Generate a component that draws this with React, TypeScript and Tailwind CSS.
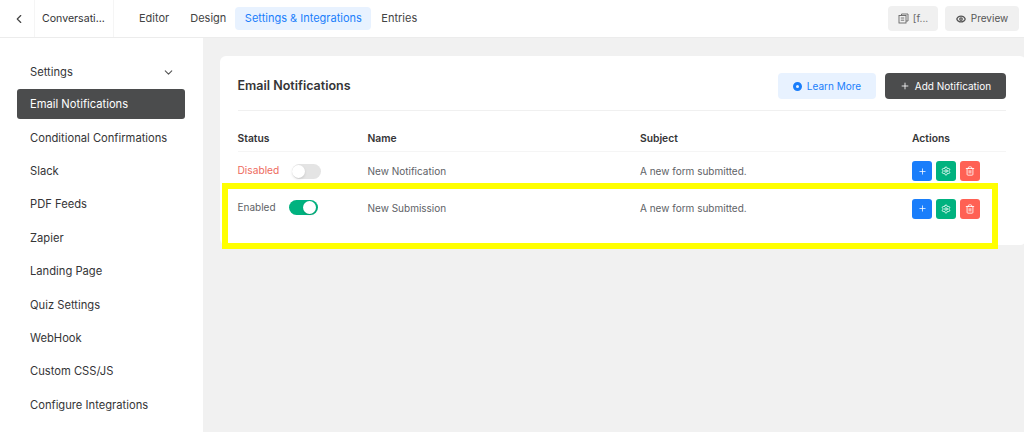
import { ChevronDown, ChevronLeft, Eye, Plus, Settings, Trash2 } from 'lucide-react';

const menu = ['Conditional Confirmations', 'Slack', 'PDF Feeds', 'Zapier', 'Landing Page', 'Quiz Settings', 'WebHook', 'Custom CSS/JS', 'Configure Integrations'];

function Actions() {
  return (
    <div className="flex gap-[4px]">
      <button className="w-[20px] h-[20px] rounded-[3px] bg-[#1a7efb] text-white flex items-center justify-center">
        <Plus size={9} />
      </button>
      <button className="w-[20px] h-[20px] rounded-[3px] bg-[#00b27f] text-white flex items-center justify-center">
        <Settings size={10} />
      </button>
      <button className="w-[20px] h-[20px] rounded-[3px] bg-[#ff6154] text-white flex items-center justify-center">
        <Trash2 size={10} />
      </button>
    </div>
  );
}

function Row({ enabled, name }: { enabled: boolean; name: string }) {
  return (
    <div className="flex items-start h-[37.5px] pt-[9px] text-[10px] text-[#606266]">
      <div className="w-[130px] flex items-center h-[20px]">
        <span className={enabled ? 'w-[51.5px] -mt-[2px] text-[#606266]' : 'w-[54.5px] -mt-[1px] text-[10.2px] text-[#ee6a5e]'}>{enabled ? 'Enabled' : 'Disabled'}</span>
        <span className={enabled ? 'w-[29px] h-[15px] -mt-[2px] rounded-full bg-[#00b27f] flex justify-end items-center px-[2px]' : 'w-[29px] h-[15px] rounded-full bg-[#e4e4e4] flex items-center'}>
          <span className="w-[13px] h-[13px] rounded-full bg-white shadow-sm" />
        </span>
      </div>
      <div className="w-[272.5px] h-[20px] flex items-center">{name}</div>
      <div className="w-[272px] h-[20px] flex items-center">A new form submitted.</div>
      <Actions />
    </div>
  );
}

export default function App() {
  return (
    <div className="relative w-[1024px] h-[432px] overflow-hidden bg-[#f1f1f1] font-['Inter',sans-serif] text-[#353537]">
      <header className="h-[38px] bg-white flex items-center border-b border-[#ececec]">
        <div className="w-[35px] flex justify-center border-r border-[#f5f5f5] h-full items-center">
          <ChevronLeft size={14} className="text-[#444] ml-[3px]" />
        </div>
        <div className="w-[79px] pl-[7px] h-full flex items-center border-r border-[#f5f5f5] text-[10.6px]">Conversati...</div>
        <nav className="flex items-center ml-[15px] text-[11px] text-[#444]">
          <span className="px-[10px]">Editor</span>
          <span className="pl-[11px] pr-[9px]">Design</span>
          <span className="px-[9.5px] h-[23px] flex items-center rounded-[4px] bg-[#e8f2ff] text-[#1a7efb]">Settings &amp; Integrations</span>
          <span className="px-[10px]">Entries</span>
        </nav>
        <div className="ml-auto flex gap-[7px] pr-[5px]">
          <button className="w-[50px] h-[25px] rounded-[4px] bg-[#f0f0f0] text-[10px] text-[#666] flex items-center justify-center gap-[4px]">
            <svg width="11" height="11" viewBox="0 0 11 11" fill="none" stroke="currentColor" strokeWidth="0.9">
              <path d="M3.5 2.5V1h6.5v7H8" />
              <rect x="1" y="2.5" width="7" height="7.5" />
              <path d="M2.8 5h3.4M2.8 7.2h3.4" />
            </svg>
            [f...
          </button>
          <button className="w-[74px] h-[25px] rounded-[4px] bg-[#f0f0f0] text-[10px] text-[#555] flex items-center justify-center gap-[5px]">
            <Eye size={10} strokeWidth={3} />Preview
          </button>
        </div>
      </header>

      <div className="flex h-[394px]">
        <aside className="w-[203px] shrink-0 bg-white pl-[17px] pt-[18px] text-[11.2px]">
          <div className="w-[168px] h-[33px] pl-[13px] pr-[10px] flex items-center justify-between">
            Settings
            <ChevronDown size={13} className="text-[#555]" />
          </div>
          <div className="w-[168px] h-[30px] mb-[2.4px] pl-[13px] flex items-center rounded-[3px] bg-[#4b4c4d] text-white">Email Notifications</div>
          {menu.map((m) => (
            <div key={m} className="h-[33.4px] pl-[13px] flex items-center">{m}</div>
          ))}
        </aside>

        <main className="pl-[17px] pt-[18px] flex-1">
          <section className="w-[806px] h-[189px] bg-white rounded-[6px] pl-[17.5px] pr-[20px]">
            <div className="h-[55px] pt-[6px] flex items-center border-b border-[#f0f0f0]">
              <h2 className="text-[12.5px] font-semibold">Email Notifications</h2>
              <button className="ml-auto w-[98px] h-[26px] rounded-[4px] bg-[#e8f2ff] text-[#1a7efb] text-[10px] flex items-center justify-center gap-[5px]">
                <span className="w-[9px] h-[9px] rounded-full border-[3px] border-[#1a7efb]" />Learn More
              </button>
              <button className="ml-[9px] w-[121px] h-[26px] rounded-[4px] bg-[#4b4c4d] text-white text-[10px] flex items-center justify-center gap-[5px]">
                <Plus size={10} />Add Notification
              </button>
            </div>
            <div className="flex items-center h-[41px] pt-[16px] border-b border-[#f5f5f5] text-[10.3px] font-semibold">
              <div className="w-[130px]">Status</div>
              <div className="w-[272.5px]">Name</div>
              <div className="w-[272px]">Subject</div>
              <div>Actions</div>
            </div>
            <Row enabled={false} name="New Notification" />
            <Row enabled name="New Submission" />
          </section>
        </main>
      </div>

      {/* yellow highlight drawn over the screenshot */}
      <div className="absolute left-[222px] top-[183px] w-[776px] h-[66px] border-[6px] border-[#ffff00]" />
    </div>
  );
}
